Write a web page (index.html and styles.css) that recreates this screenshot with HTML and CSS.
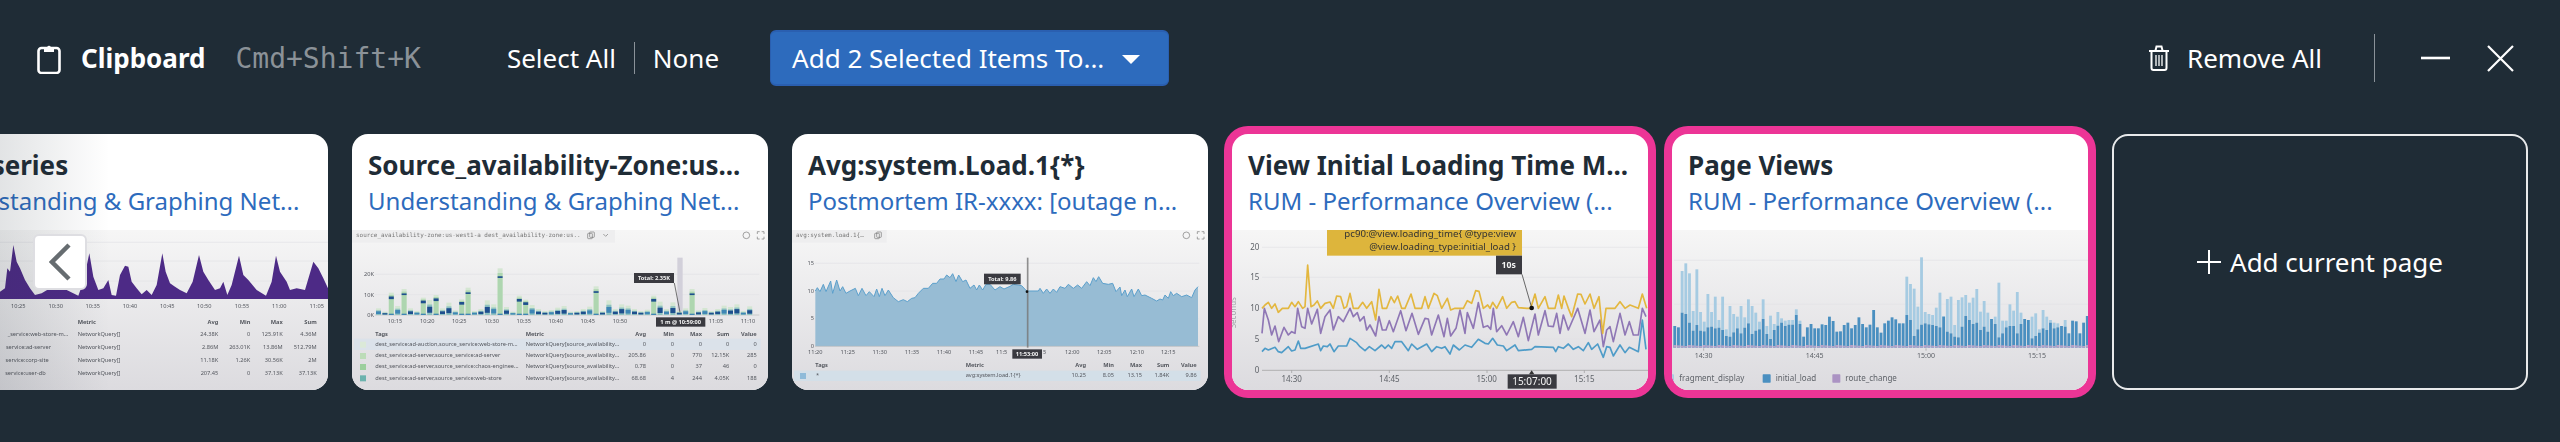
FILE: index.html
```html
<!DOCTYPE html>
<html lang="en">
<head>
    <meta charset="UTF-8">
    <title>Clipboard</title>
    <link rel="stylesheet" href="styles.css">
</head>
<body>
    <header class="bar">
        <svg class="icon-clip" viewBox="0 0 24 32" width="24" height="32">
            <rect x="1.500" y="6" width="21" height="25" rx="3" fill="none" stroke="#fff" stroke-width="2.600"/>
            <path d="M7 10V5h3.200a2 2 0 0 1 3.600 0H17v5z" fill="#fff"/>
        </svg>
        <b class="bar-title">Clipboard</b>
        <span class="shortcut">Cmd+Shift+K</span>
        <a class="bar-link select-all">Select All</a>
        <i class="bar-rule"></i>
        <a class="bar-link">None</a>
        <button class="add-btn">Add 2 Selected Items To...<i class="caret"></i></button>
        <div class="bar-right">
            <svg class="icon-trash" viewBox="0 0 22 26" width="22" height="26" fill="none" stroke="#fff">
                <path d="M1 6h20M7.500 5.500l1-4h5l1 4" stroke-width="2"/>
                <path d="M3.500 6.500V23a2 2 0 0 0 2 2h11a2 2 0 0 0 2-2V6.500" stroke-width="2"/>
                <path d="M8 10v11M11 10v11M14 10v11" stroke-width="1.300"/>
            </svg>
            <a class="bar-link">Remove All</a>
            <i class="bar-rule tall"></i>
            <svg class="icon-min" viewBox="0 0 29 4" width="29" height="4"><path d="M0 2h29" stroke="#fff" stroke-width="2.600"/></svg>
            <svg class="icon-close" viewBox="0 0 27 27" width="27" height="27"><path d="M1 1l25 25M26 1L1 26" stroke="#fff" stroke-width="2.200"/></svg>
        </div>
    </header>

    <main class="shelf">
        <section class="card first">
            <div class="card-head">
                <h2>Timeseries</h2>
                <p>Understanding &amp; Graphing Net...</p>
            </div>
            <div class="thumb">
                <svg viewBox="-264 315 1248 480">
                    <path class="grid" d="M-264 352H984M-264 408H984M-264 468H984"/>
                    <path id="purpleArea" fill="#4d2a86"/>
                    <g class="tk">
                        <text class="mid" x="55" y="550">10:25</text><text class="mid" x="167" y="550">10:30</text>
                        <text class="mid" x="278" y="550">10:35</text><text class="mid" x="390" y="550">10:40</text>
                        <text class="mid" x="502" y="550">10:45</text><text class="mid" x="613" y="550">10:50</text>
                        <text class="mid" x="726" y="550">10:55</text><text class="mid" x="838" y="550">11:00</text>
                        <text class="mid" x="950" y="550">11:05</text>
                    </g>
                    <g class="tk">
                        <text class="hd" x="233" y="598">Metric</text>
                        <text class="hd end" x="655" y="598">Avg</text><text class="hd end" x="751" y="598">Min</text>
                        <text class="hd end" x="848" y="598">Max</text><text class="hd end" x="950" y="598">Sum</text>
                        <text class="end" x="205" y="633">_service:web-store-m...</text>
                        <text class="end" x="153" y="672">service:ad-server</text>
                        <text class="end" x="146" y="711">service:corp-site</text>
                        <text class="end" x="137" y="750">service:user-db</text>
                        <text x="233" y="633">NetworkQuery[]</text><text x="233" y="672">NetworkQuery[]</text>
                        <text x="233" y="711">NetworkQuery[]</text><text x="233" y="750">NetworkQuery[]</text>
                        <text class="end" x="655" y="633">24.38K</text><text class="end" x="751" y="633">0</text><text class="end" x="848" y="633">125.91K</text><text class="end" x="950" y="633">4.36M</text>
                        <text class="end" x="655" y="672">2.86M</text><text class="end" x="751" y="672">263.01K</text><text class="end" x="848" y="672">13.86M</text><text class="end" x="950" y="672">512.79M</text>
                        <text class="end" x="655" y="711">11.18K</text><text class="end" x="751" y="711">1.26K</text><text class="end" x="848" y="711">30.56K</text><text class="end" x="950" y="711">2M</text>
                        <text class="end" x="655" y="750">207.45</text><text class="end" x="751" y="750">0</text><text class="end" x="848" y="750">37.13K</text><text class="end" x="950" y="750">37.13K</text>
                    </g>
                </svg>
            </div>
            <div class="fade"></div>
        </section>

        <section class="card">
            <div class="card-head">
                <h2>Source_availability-Zone:us...</h2>
                <p>Understanding &amp; Graphing Net...</p>
            </div>
            <div class="thumb">
                <svg viewBox="36 315 1248 480">
                    <rect x="36" y="315" width="789" height="38" fill="#eeeeef"/>
                    <text class="mono" x="48" y="337">source_availability-zone:us-west1-a dest_availability-zone:us..</text>
                    <g fill="none" stroke="#777" stroke-width="2">
                        <rect x="743" y="325" width="14" height="16" rx="2"/><rect x="749" y="321" width="14" height="16" rx="2"/>
                        <path d="M790 327l7 7 7-7"/>
                        <circle cx="1219" cy="331" r="10"/>
                        <path d="M1252 327v-7h7M1265 320h7v7M1272 335v7h-7M1259 342h-7v-7"/>
                    </g>
                    <path class="grid" d="M105 448H1258M105 509H1258"/>
                    <path d="M105 570H1258" stroke="#bbb" stroke-width="2"/>
                    <g class="tk">
                        <text class="end" x="102" y="454">20K</text><text class="end" x="102" y="515">10K</text><text class="end" x="102" y="576">0K</text>
                    </g>
                    <rect x="1012" y="398" width="16" height="172" fill="#d2d0da"/>
                    <g id="stackBars"></g>
                    <path d="M1003 474L1020 562" stroke="#333" stroke-width="2"/>
                    <rect class="tip" x="882" y="444" width="120" height="30"/>
                    <text class="tip-text mid" x="942" y="465">Total: 2.35K</text>
                    <g class="tk">
                        <text class="mid" x="165" y="593">10:15</text><text class="mid" x="262" y="593">10:20</text><text class="mid" x="358" y="593">10:25</text>
                        <text class="mid" x="455" y="593">10:30</text><text class="mid" x="551" y="593">10:35</text><text class="mid" x="647" y="593">10:40</text>
                        <text class="mid" x="743" y="593">10:45</text><text class="mid" x="840" y="593">10:50</text>
                        <text class="mid" x="1128" y="593">11:05</text><text class="mid" x="1224" y="593">11:10</text>
                    </g>
                    <rect class="tip" x="948" y="577" width="148" height="28"/>
                    <text class="tip-text mid" x="1022" y="597">1 m @ 10:59:00</text>
                    <rect x="42" y="641" width="1220" height="34" fill="#dbe2ea"/>
                    <rect x="60" y="650" width="18" height="18" fill="#dbe9d8"/>
                    <rect x="60" y="684" width="18" height="18" fill="#bcdcb8"/>
                    <rect x="60" y="717" width="18" height="18" fill="#9ccf9d"/>
                    <rect x="60" y="751" width="18" height="18" fill="#6cb3ae"/>
                    <g class="tk">
                        <text class="hd" x="106" y="633">Tags</text><text class="hd" x="557" y="633">Metric</text>
                        <text class="hd end" x="918" y="633">Avg</text><text class="hd end" x="1002" y="633">Min</text><text class="hd end" x="1086" y="633">Max</text><text class="hd end" x="1168" y="633">Sum</text><text class="hd end" x="1250" y="633">Value</text>
                        <text x="106" y="663">dest_service:ad-auction,source_service:web-store-m...</text>
                        <text x="106" y="697">dest_service:ad-server,source_service:ad-server</text>
                        <text x="106" y="730">dest_service:ad-server,source_service:chaos-enginee...</text>
                        <text x="106" y="764">dest_service:ad-server,source_service:web-store</text>
                        <text x="557" y="663">NetworkQuery[source_availability...</text><text x="557" y="697">NetworkQuery[source_availability...</text>
                        <text x="557" y="730">NetworkQuery[source_availability...</text><text x="557" y="764">NetworkQuery[source_availability...</text>
                        <text class="end" x="918" y="663">0</text><text class="end" x="1002" y="663">0</text><text class="end" x="1086" y="663">0</text><text class="end" x="1168" y="663">0</text><text class="end" x="1250" y="663">0</text>
                        <text class="end" x="918" y="697">205.86</text><text class="end" x="1002" y="697">0</text><text class="end" x="1086" y="697">770</text><text class="end" x="1168" y="697">12.15K</text><text class="end" x="1250" y="697">285</text>
                        <text class="end" x="918" y="730">0.78</text><text class="end" x="1002" y="730">0</text><text class="end" x="1086" y="730">37</text><text class="end" x="1168" y="730">46</text><text class="end" x="1250" y="730">0</text>
                        <text class="end" x="918" y="764">68.68</text><text class="end" x="1002" y="764">4</text><text class="end" x="1086" y="764">244</text><text class="end" x="1168" y="764">4.05K</text><text class="end" x="1250" y="764">188</text>
                    </g>
                </svg>
            </div>
        </section>

        <section class="card">
            <div class="card-head">
                <h2>Avg:system.Load.1{*}</h2>
                <p>Postmortem IR-xxxx: [outage n...</p>
            </div>
            <div class="thumb">
                <svg viewBox="36 315 1248 480">
                    <rect x="36" y="315" width="284" height="38" fill="#eeeeef"/>
                    <text class="mono" x="48" y="337">avg:system.load.1{…</text>
                    <g fill="none" stroke="#777" stroke-width="2">
                        <rect x="284" y="325" width="14" height="16" rx="2"/><rect x="290" y="321" width="14" height="16" rx="2"/>
                        <circle cx="1219" cy="331" r="10"/>
                        <path d="M1252 327v-7h7M1265 320h7v7M1272 335v7h-7M1259 342h-7v-7"/>
                    </g>
                    <path class="grid" d="M105 415H1258M105 498H1258M105 581H1258"/>
                    <path id="loadArea" fill="#97bcd4"/>
                    <path id="loadLine" fill="none" stroke="#5b9fcb" stroke-width="3"/>
                    <path d="M105 664H1258" stroke="#bbb" stroke-width="2"/>
                    <g class="tk">
                        <text class="end" x="102" y="420">15</text><text class="end" x="102" y="503">10</text><text class="end" x="102" y="586">5</text><text class="end" x="102" y="668">0</text>
                    </g>
                    <path d="M743 398V668" stroke="#777" stroke-width="5" opacity=".8"/>
                    <circle cx="741" cy="500" r="4" fill="#111"/>
                    <rect class="tip" x="612" y="446" width="110" height="32"/>
                    <text class="tip-text mid" x="667" y="468">Total: 9.86</text>
                    <g class="tk">
                        <text class="mid" x="106" y="686">11:20</text><text class="mid" x="203" y="686">11:25</text><text class="mid" x="299" y="686">11:30</text><text class="mid" x="396" y="686">11:35</text>
                        <text class="mid" x="492" y="686">11:40</text><text class="mid" x="588" y="686">11:45</text><text class="mid" x="665" y="686">11:5</text><text x="789" y="686">5</text>
                        <text class="mid" x="877" y="686">12:00</text><text class="mid" x="973" y="686">12:05</text><text class="mid" x="1070" y="686">12:10</text><text class="mid" x="1165" y="686">12:15</text>
                    </g>
                    <rect class="tip" x="697" y="673" width="89" height="28"/>
                    <text class="tip-text mid" x="741" y="693">11:53:00</text>
                    <rect x="42" y="737" width="1220" height="31" fill="#d3dfe8"/>
                    <rect x="60" y="744" width="18" height="18" fill="#8fbbd9"/>
                    <g class="tk">
                        <text class="hd" x="106" y="727">Tags</text><text class="hd" x="557" y="727">Metric</text>
                        <text class="hd end" x="918" y="727">Avg</text><text class="hd end" x="1002" y="727">Min</text><text class="hd end" x="1086" y="727">Max</text><text class="hd end" x="1168" y="727">Sum</text><text class="hd end" x="1250" y="727">Value</text>
                        <text x="108" y="757">*</text><text x="557" y="757">avg:system.load.1{*}</text>
                        <text class="end" x="918" y="757">10.25</text><text class="end" x="1002" y="757">8.05</text><text class="end" x="1086" y="757">13.15</text><text class="end" x="1168" y="757">1.84K</text><text class="end" x="1250" y="757">9.86</text>
                    </g>
                </svg>
            </div>
        </section>

        <section class="card selected">
            <div class="card-head">
                <h2>View Initial Loading Time M...</h2>
                <p>RUM - Performance Overview (...</p>
            </div>
            <div class="thumb">
                <svg viewBox="66 330 1248 480">
                    <path class="grid" d="M156 382H1314M156 472H1314M156 565H1314M156 658H1314"/>
                    <path d="M156 751H1314M245 751v8M538 751v8M831 751v8M1123 751v8" stroke="#999" stroke-width="2" fill="none"/>
                    <text class="lbl end" x="148" y="389">20</text><text class="lbl end" x="148" y="481">15</text><text class="lbl end" x="148" y="573">10</text><text class="lbl end" x="148" y="666">5</text><text class="lbl end" x="148" y="759">0</text>
                    <text class="lbl" transform="translate(78 625) rotate(-90)" opacity=".5">Seconds</text>
                    <polyline id="lineBlue" class="rum-line" stroke="#4f9cc8"/>
                    <polyline id="linePurple" class="rum-line" stroke="#8f77b5"/>
                    <polyline id="lineYellow" class="rum-line" stroke="#e3b73f"/>
                    <rect x="351" y="330" width="585" height="77" fill="#ddb53c"/>
                    <text class="lbl end dark" x="918" y="350">pc90:@view.loading_time{ @type:view</text>
                    <text class="lbl end dark" x="918" y="390">@view.loading_type:initial_load }</text>
                    <rect class="tip" x="858" y="407" width="78" height="56"/>
                    <text class="tip-big mid" x="896" y="444">10s</text>
                    <path d="M936 463L965 563" stroke="#222" stroke-width="2"/>
                    <circle cx="965" cy="564" r="7" fill="#111"/>
                    <text class="lbl mid" x="245" y="786">14:30</text><text class="lbl mid" x="538" y="786">14:45</text><text class="lbl mid" x="830" y="786">15:00</text><text class="lbl mid" x="1123" y="786">15:15</text>
                    <path d="M965 751l8 12h-16z" fill="#333"/>
                    <rect class="tip" x="893" y="763" width="147" height="43"/>
                    <text class="tip-time mid" x="966" y="796">15:07:00</text>
                </svg>
            </div>
        </section>

        <section class="card selected">
            <div class="card-head">
                <h2>Page Views</h2>
                <p>RUM - Performance Overview (...</p>
            </div>
            <div class="thumb">
                <svg viewBox="66 330 1248 480">
                    <path class="grid" d="M72 421H1314M72 553H1314"/>
                    <g id="viewBars"></g>
                    <path d="M161 685v7M494 685v7M828 685v7M1161 685v7" stroke="#999" stroke-width="2"/>
                    <text class="lbl small mid" x="161" y="715">14:30</text><text class="lbl small mid" x="494" y="715">14:45</text><text class="lbl small mid" x="828" y="715">15:00</text><text class="lbl small mid" x="1161" y="715">15:15</text>
                    <rect x="50" y="763" width="22" height="25" rx="2" fill="#a6cbe2"/>
                    <text class="lbl" x="88" y="784">fragment_display</text>
                    <rect x="338" y="763" width="24" height="25" rx="2" fill="#4a8fc0"/>
                    <text class="lbl" x="377" y="784">initial_load</text>
                    <rect x="547" y="763" width="24" height="25" rx="2" fill="#ab93c3"/>
                    <text class="lbl" x="586" y="784">route_change</text>
                </svg>
            </div>
        </section>

        <button class="card add-page">
            <svg viewBox="0 0 24 24" width="24" height="24"><path d="M12 0v24M0 12h24" stroke="#fff" stroke-width="2"/></svg>
            Add current page
        </button>

        <button class="prev">
            <svg viewBox="0 0 22 38" width="22" height="38"><path d="M20 2L3 19l17 17" fill="none" stroke="#666c70" stroke-width="4.500"/></svg>
        </button>
    </main>

    <script src="charts.js"></script>
</body>
</html>
```

FILE: styles.css
```css
* {
    box-sizing: border-box;
}

body {
    margin: 0;
    height: 442px;
    overflow: hidden;
    background: #1f2c36;
    color: #fff;
    font-family: "Noto Sans", sans-serif;
    font-size: 26px;
}

.bar {
    display: flex;
    align-items: center;
    height: 116px;
    padding: 0 46px 0 37px;
}

.bar-title {
    margin-left: 20px;
}

.shortcut {
    margin-left: 30px;
    color: #8b9298;
    font-family: "DejaVu Sans Mono", monospace;
    font-size: 28px;
}

.select-all {
    margin-left: 86px;
}

.bar-rule {
    width: 1px;
    height: 32px;
    margin: 0 18px;
    background: #8a9299;
}

.bar-rule.tall {
    height: 48px;
    margin: 0 46px 0 52px;
}

.add-btn {
    display: flex;
    align-items: center;
    height: 56px;
    margin-left: 51px;
    padding: 0 28px 0 21px;
    border: 1px solid #2a5fb0;
    border-top-width: 2px;
    border-bottom-width: 2px;
    border-radius: 6px;
    background: #2d6bbd;
    color: #fff;
    font: inherit;
}

.caret {
    width: 0;
    height: 0;
    margin: 2px 0 0 18px;
    border-top: 9px solid #fff;
    border-left: 9px solid transparent;
    border-right: 9px solid transparent;
}

.bar-right {
    display: flex;
    align-items: center;
    margin-left: auto;
}

.icon-trash {
    margin-right: 17px;
}

.icon-close {
    margin-left: 37px;
}

.shelf {
    position: relative;
    display: flex;
    gap: 24px;
    margin: 18px 0 0 -88px;
}

.card {
    position: relative;
    flex: none;
    width: 416px;
    height: 256px;
    border-radius: 16px;
    background: #fff;
    overflow: hidden;
}

.card.selected {
    overflow: visible;
    box-shadow: 0 0 0 8px #ec3596;
}

.card.selected .thumb {
    border-radius: 0 0 16px 16px;
    overflow: hidden;
}

.card-head {
    height: 96px;
    padding: 13px 16px 0;
}

.card-head h2,
.card-head p {
    margin: 0;
    line-height: 36px;
    white-space: nowrap;
}

.card-head h2 {
    color: #1f2c36;
    font-size: 26px;
    font-weight: 700;
}

.card-head p {
    color: #2d6bbd;
    font-size: 24px;
}

.thumb {
    height: 160px;
    background: linear-gradient(#f6f6f6, #dcdbdf);
}

.thumb svg {
    display: block;
    width: 416px;
    height: 160px;
    filter: blur(.5px);
}

.fade {
    position: absolute;
    top: 0;
    left: 88px;
    width: 110px;
    height: 100%;
    background: linear-gradient(to right, rgba(31, 44, 54, .13), rgba(31, 44, 54, 0));
}

.add-page {
    display: flex;
    align-items: center;
    justify-content: center;
    gap: 9px;
    border: 2px solid #e8eaeb;
    background: none;
    color: #fff;
    font: inherit;
}

.prev {
    position: absolute;
    top: 100px;
    left: 121px;
    display: flex;
    align-items: center;
    justify-content: center;
    width: 54px;
    height: 56px;
    padding: 0;
    border: 2px solid #dedee2;
    border-radius: 6px;
    background: #fff;
}

.grid {
    fill: none;
    stroke: #e2e2e5;
    stroke-width: 2;
}

.tk text {
    fill: #54575e;
    font-size: 17px;
}

.tk .hd {
    font-weight: 700;
}

.end {
    text-anchor: end;
}

.mid {
    text-anchor: middle;
}

.mono {
    fill: #777;
    font-family: "DejaVu Sans Mono", monospace;
    font-size: 17.800px;
}

.tip {
    fill: #3a3a40;
}

.tip-text {
    fill: #f4f4f4;
    font-size: 17px;
    font-weight: 700;
}

.tip-big {
    fill: #f4f4f4;
    font-size: 26px;
    font-weight: 700;
}

.tip-time {
    fill: #f4f4f4;
    font-size: 30px;
}

.lbl {
    fill: #5e6268;
    font-size: 24px;
}

.lbl.small {
    font-size: 21px;
}

.lbl.dark {
    fill: #333;
    font-size: 29px;
}

.rum-line {
    fill: none;
    stroke-width: 5;
    stroke-linejoin: round;
}
```

FILE: charts.js
```js
const SVG_NS = 'http://www.w3.org/2000/svg';

function addRect(parent, x, y, w, h, fill) {
    if (h <= 0) return;
    let r = document.createElementNS(SVG_NS, 'rect');
    r.setAttribute('x', x);
    r.setAttribute('y', y);
    r.setAttribute('width', w);
    r.setAttribute('height', h);
    r.setAttribute('fill', fill);
    parent.appendChild(r);
}

function toLine(pts) {
    return pts.map(p => p.join(',')).join(' ');
}

// card 1 - purple area
let purple = [[-264,500],[0,500],[15,490],[22,430],[30,440],[40,360],[50,410],[60,430],[75,465],[90,490],[105,510],[125,505],[150,490],[175,480],[200,495],[235,512],[250,470],[268,385],[280,455],[295,495],[310,490],[325,465],[335,510],[348,512],[360,450],[375,422],[385,425],[395,470],[410,490],[425,508],[440,495],[455,510],[470,480],[487,385],[497,440],[510,475],[525,485],[540,495],[560,505],[578,470],[597,390],[610,440],[625,465],[645,495],[660,490],[670,470],[682,510],[695,480],[717,392],[730,450],[745,465],[770,495],[798,512],[815,470],[828,392],[840,440],[860,470],[870,495],[890,490],[915,495],[940,410],[955,430],[970,460],[984,490]];
document.getElementById('purpleArea').setAttribute('d', 'M-264 522L' + toLine(purple) + 'L984 522Z');

// card 2 - stacked bars, value is the top of the bar
let stackTops = [550,560,503,543,492,550,558,518,525,510,550,533,556,523,488,558,552,526,538,430,546,560,512,524,540,552,558,555,548,543,560,558,552,545,484,558,526,552,538,542,552,558,554,512,530,552,532,558,550,492,556,549,558,552,542,546,538,558,544];
let stackBars = document.getElementById('stackBars');
stackTops.forEach((top, i) => {
    let x = 108 + i * 19.2;
    let h = 570 - top;
    addRect(stackBars, x, top, 15, h, '#d4e6d2');
    if (h > 45) {
        addRect(stackBars, x, top + h * .1, 15, h * .9, '#aed6b0');
        addRect(stackBars, x, top + h * .17, 15, h > 70 ? 5 : 8, '#1e4f8e');
        addRect(stackBars, x, 566, 15, 4, '#3f86b5');
    } else {
        addRect(stackBars, x, top + h * .3, 15, h * .7, '#8fc2c0');
        addRect(stackBars, x, top + h * .45, 15, h * .4, i % 3 ? '#1e4f8e' : '#3f86b5');
    }
});

// card 3 - system load
let load = [[106,498],[112,488],[120,500],[130,478],[138,500],[152,468],[158,505],[170,465],[180,498],[188,485],[198,505],[210,498],[226,490],[235,512],[246,490],[258,512],[268,500],[282,515],[290,492],[298,515],[306,490],[315,512],[325,495],[340,518],[355,530],[370,524],[382,530],[395,520],[405,518],[415,505],[430,490],[445,490],[458,475],[470,475],[480,462],[492,462],[500,450],[510,458],[518,446],[528,470],[536,450],[548,470],[558,465],[570,490],[582,480],[590,495],[598,480],[608,495],[618,478],[630,478],[645,495],[660,485],[672,492],[690,484],[700,478],[725,482],[740,498],[750,498],[775,498],[780,490],[790,505],[800,492],[810,505],[820,492],[830,502],[840,485],[855,490],[865,478],[880,490],[893,480],[905,490],[920,470],[930,482],[940,458],[948,470],[956,455],[968,475],[985,478],[998,475],[1008,500],[1020,486],[1025,512],[1035,495],[1042,515],[1055,492],[1062,515],[1075,492],[1085,512],[1095,510],[1115,520],[1130,528],[1140,522],[1148,525],[1155,510],[1165,520],[1172,500],[1180,512],[1190,505],[1205,515],[1220,510],[1235,518],[1245,495],[1254,485]];
document.getElementById('loadArea').setAttribute('d', 'M106 664L' + toLine(load) + 'L1254 664Z');
document.getElementById('loadLine').setAttribute('d', 'M' + toLine(load));

// card 4 - rum loading time
let yellow = [[156,565],[165,555],[175,547],[185,565],[195,552],[205,577],[217,565],[235,565],[245,547],[255,560],[265,545],[278,565],[285,560],[293,435],[303,560],[312,555],[322,543],[332,565],[345,550],[360,546],[370,565],[380,528],[392,530],[402,565],[410,560],[420,520],[430,565],[445,565],[458,547],[470,565],[485,545],[497,600],[507,508],[517,565],[530,565],[543,530],[553,548],[563,528],[575,565],[585,565],[603,522],[615,565],[635,565],[645,530],[655,565],[672,520],[682,527],[695,565],[712,535],[722,570],[735,565],[760,565],[772,542],[785,550],[797,512],[807,514],[820,565],[833,555],[840,565],[848,547],[860,565],[878,530],[890,565],[905,547],[915,545],[925,563],[950,565],[962,565],[975,522],[985,565],[1005,530],[1015,565],[1035,565],[1045,525],[1055,565],[1062,528],[1075,565],[1085,590],[1103,522],[1113,523],[1125,552],[1140,522],[1152,565],[1167,530],[1178,640],[1188,565],[1215,565],[1230,545],[1245,565],[1260,555],[1285,565],[1297,522],[1310,565]];
let violet = [[156,640],[163,565],[175,600],[185,645],[195,618],[206,665],[222,622],[235,645],[245,635],[255,640],[263,565],[275,620],[285,625],[293,565],[305,612],[322,568],[332,640],[345,590],[360,570],[370,630],[385,590],[400,605],[420,565],[430,590],[442,578],[450,603],[462,590],[470,630],[480,615],[497,648],[507,590],[517,630],[528,630],[538,602],[550,635],[572,572],[588,632],[606,580],[625,643],[645,595],[655,597],[665,645],[685,585],[702,650],[712,595],[722,648],[738,625],[750,570],[765,640],[772,578],[790,625],[805,548],[820,622],[833,617],[842,628],[850,565],[860,635],[875,617],[890,645],[910,605],[925,650],[940,592],[955,662],[975,582],[985,645],[1005,572],[1015,618],[1030,620],[1040,580],[1050,640],[1060,585],[1075,630],[1103,565],[1125,640],[1140,570],[1152,635],[1170,600],[1180,680],[1190,630],[1200,620],[1210,665],[1230,580],[1245,645],[1258,605],[1270,645],[1285,645],[1297,565],[1308,590]];
let blue = [[156,695],[165,685],[175,690],[195,682],[205,695],[215,698],[235,680],[245,693],[255,690],[265,663],[272,685],[285,685],[325,672],[332,692],[340,678],[352,680],[360,672],[372,695],[385,678],[410,678],[420,655],[440,668],[450,680],[465,692],[478,680],[495,692],[515,675],[525,685],[535,675],[545,685],[555,665],[575,665],[595,692],[605,672],[622,688],[650,672],[665,695],[680,680],[695,685],[705,680],[720,702],[730,675],[748,690],[765,675],[785,682],[805,658],[825,670],[835,672],[848,655],[862,675],[880,678],[890,692],[915,675],[925,692],[965,688],[975,680],[1030,682],[1037,695],[1045,680],[1060,685],[1075,672],[1090,688],[1105,680],[1120,692],[1135,668],[1145,688],[1163,672],[1180,712],[1190,680],[1200,682],[1210,708],[1230,675],[1245,698],[1258,682],[1285,695],[1297,600],[1308,688]];
document.getElementById('lineYellow').setAttribute('points', toLine(yellow));
document.getElementById('linePurple').setAttribute('points', toLine(violet));
document.getElementById('lineBlue').setAttribute('points', toLine(blue));

// card 5 - page views, tops of the dark and light bars (0 = no light part)
let darkTops = [618,622,578,582,608,632,615,632,634,622,620,625,623,630,648,650,637,625,640,623,610,642,632,628,597,642,657,630,617,608,618,614,614,585,612,650,622,612,625,625,613,615,590,603,635,634,615,608,625,615,592,612,622,614,570,622,638,610,602,592,598,610,610,585,600,648,628,614,610,613,615,618,622,590,635,640,650,652,620,588,600,612,608,630,620,635,597,612,652,640,622,618,618,640,612,597,600,655,648,638,625,630,608,625,622,618,620,640,602,604,640,608,588,632];
let lightTops = [0,0,453,430,460,573,448,576,605,522,576,530,600,530,628,558,582,590,558,592,538,558,578,605,538,618,587,612,576,595,602,600,600,568,602,0,0,0,0,0,0,0,0,0,0,0,0,0,0,0,0,0,0,0,0,0,0,0,0,0,0,0,0,470,492,506,560,412,576,582,585,563,518,588,537,530,615,540,532,525,548,533,507,575,543,578,597,590,488,602,602,553,572,516,578,603,640,590,580,628,570,590,600,608,610,620,600,0,0,0,0,0,0,0];
let viewBars = document.getElementById('viewBars');
darkTops.forEach((top, i) => {
    let x = 70 + i * 11.05;
    if (lightTops[i]) addRect(viewBars, x, lightTops[i], 8.5, top - lightTops[i], '#a6cbe2');
    addRect(viewBars, x, top, 8.5, 683 - top, '#4a8fc0');
    addRect(viewBars, x, 675 + (i % 4), 8.5, 8 - (i % 4), '#b5a1c8');
});
```
